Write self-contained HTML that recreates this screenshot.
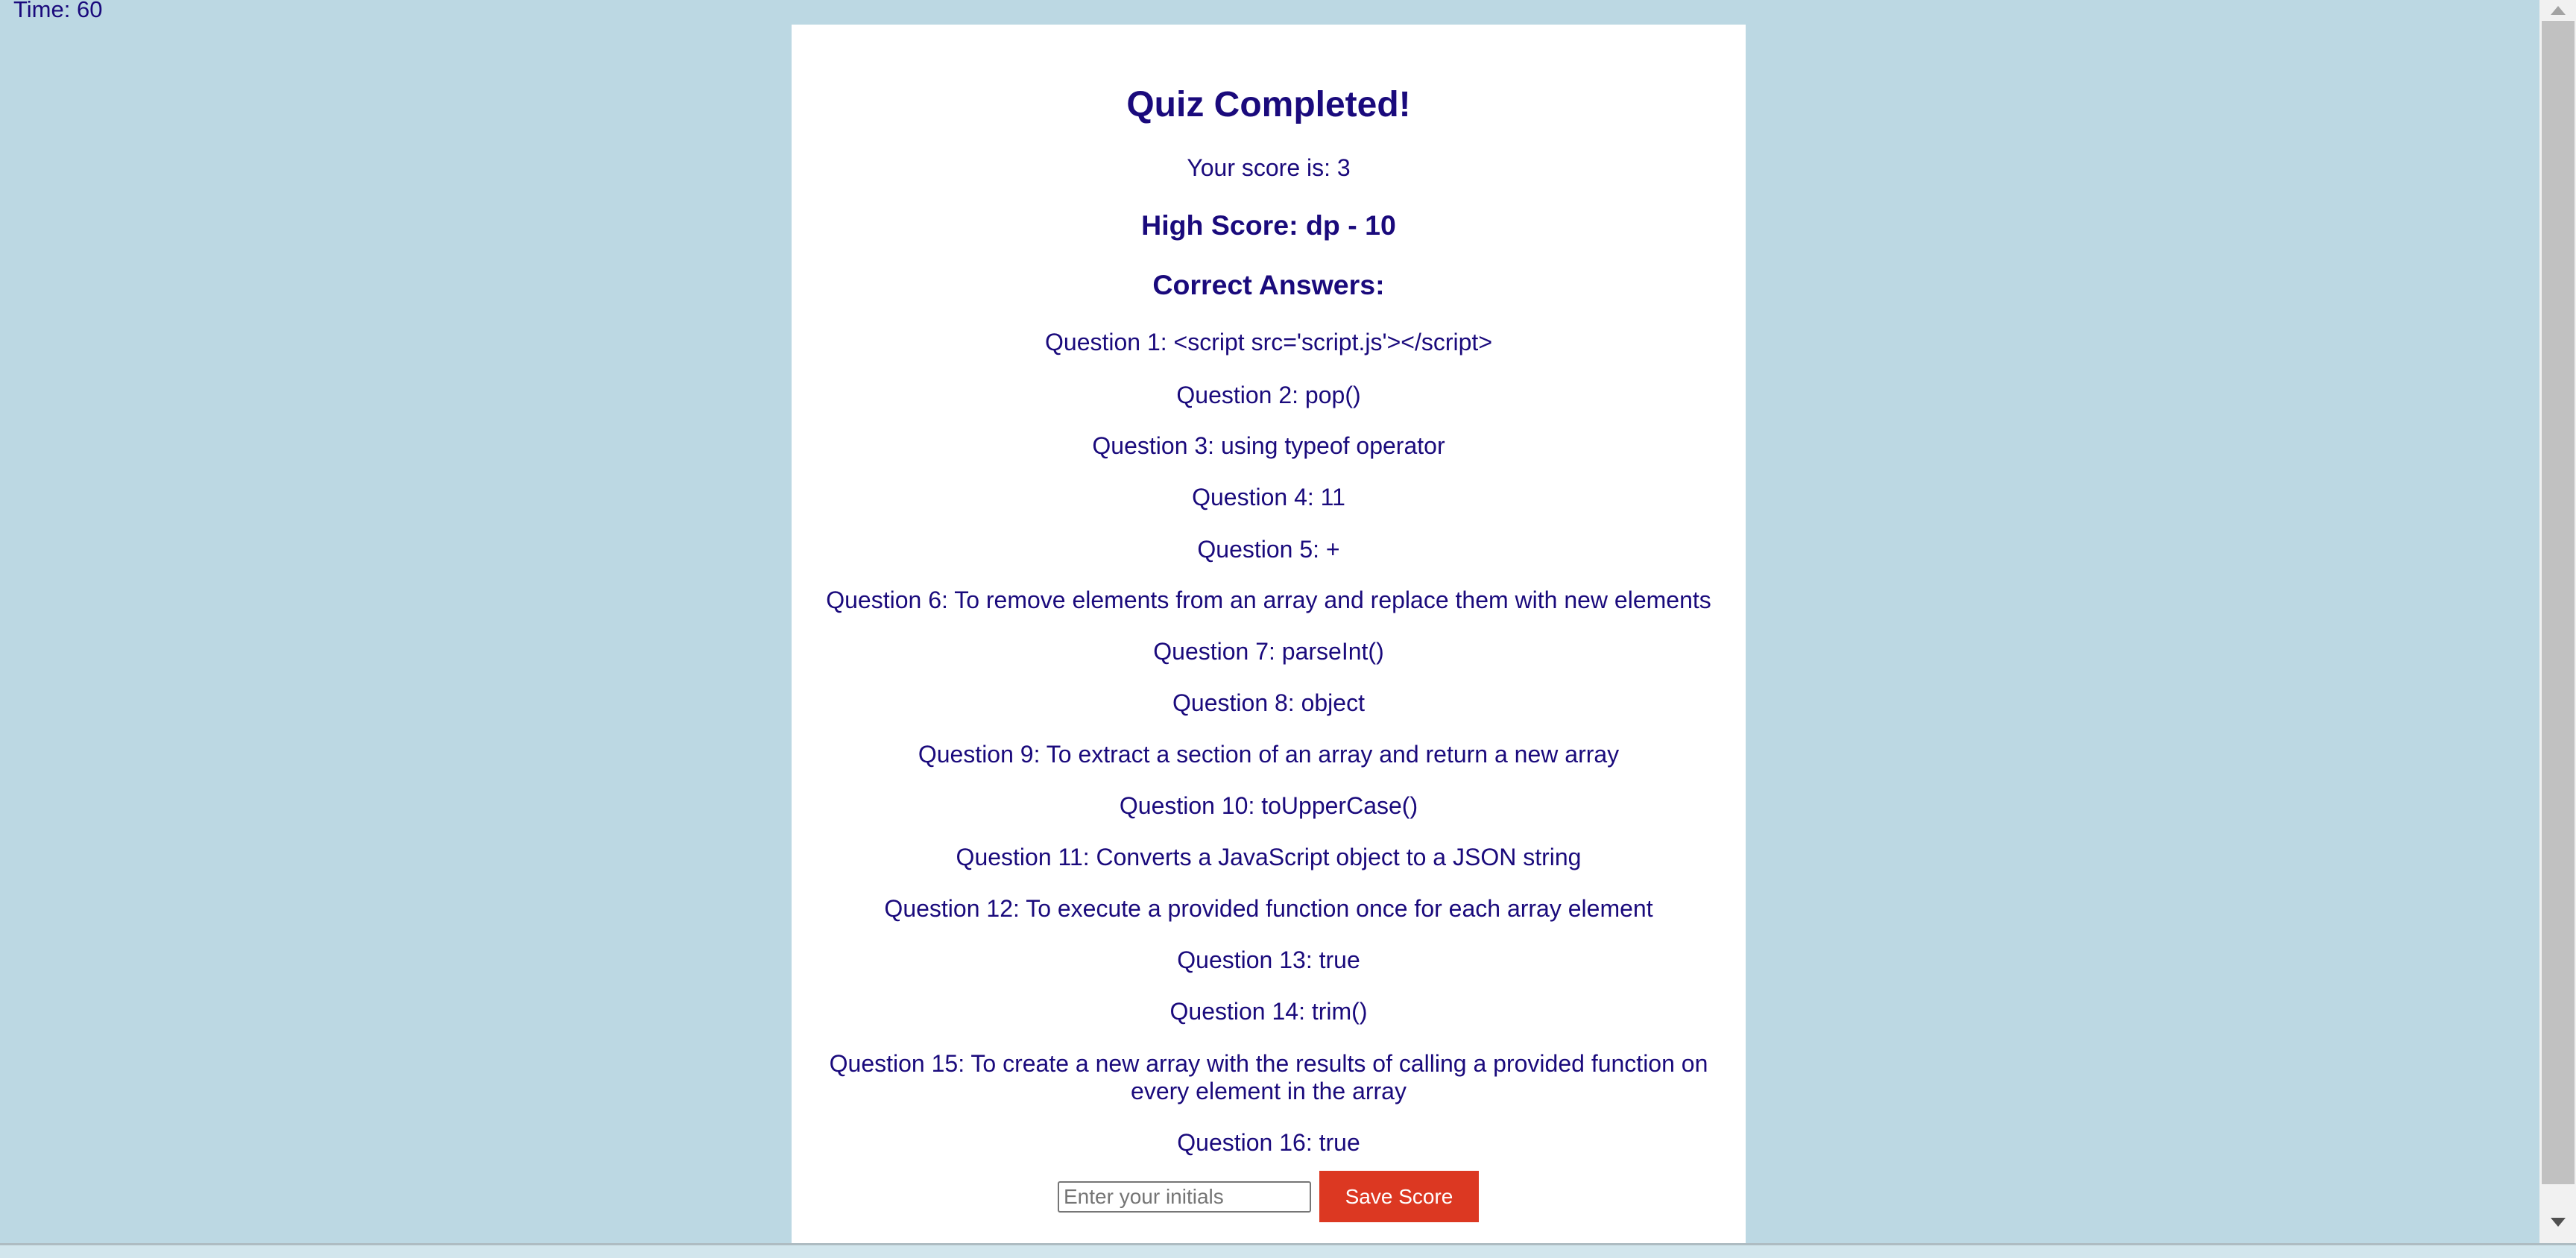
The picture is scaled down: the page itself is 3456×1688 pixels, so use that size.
<!DOCTYPE html>
<html><head><style>
body{margin:0;width:3456px;height:1688px;background:#bcd8e3;font-family:"Liberation Sans",Arial,sans-serif;color:#1a0a7c;overflow:hidden;position:relative}
.t{position:absolute;left:0;width:100%;text-align:center;font-size:32px;line-height:40px;white-space:nowrap}
#card{position:absolute;left:1062px;top:33px;width:1280px;height:1635px;background:#fff}
.b{font-weight:bold}
</style></head><body>
<div style="position:absolute;left:18px;top:-7px;font-size:31px;line-height:40px">Time: 60</div>
<div id="card">
<div class="t b" style="top:78px;font-size:48px;line-height:60px">Quiz Completed!</div>
<div class="t" style="top:172px">Your score is: 3</div>
<div class="t b" style="top:245px;font-size:37.5px;line-height:48px">High Score: dp - 10</div>
<div class="t b" style="top:325px;font-size:37.5px;line-height:48px">Correct Answers:</div>
<div class="t" style="top:406px">Question 1: &lt;script src='script.js'&gt;&lt;/script&gt;</div>
<div class="t" style="top:477px">Question 2: pop()</div>
<div class="t" style="top:545px">Question 3: using typeof operator</div>
<div class="t" style="top:614px">Question 4: 11</div>
<div class="t" style="top:684px">Question 5: +</div>
<div class="t" style="top:752px">Question 6: To remove elements from an array and replace them with new elements</div>
<div class="t" style="top:821px">Question 7: parseInt()</div>
<div class="t" style="top:890px">Question 8: object</div>
<div class="t" style="top:959px">Question 9: To extract a section of an array and return a new array</div>
<div class="t" style="top:1028px">Question 10: toUpperCase()</div>
<div class="t" style="top:1097px">Question 11: Converts a JavaScript object to a JSON string</div>
<div class="t" style="top:1166px">Question 12: To execute a provided function once for each array element</div>
<div class="t" style="top:1235px">Question 13: true</div>
<div class="t" style="top:1304px">Question 14: trim()</div>
<div class="t" style="top:1374px">Question 15: To create a new array with the results of calling a provided function on</div>
<div class="t" style="top:1411px">every element in the array</div>
<div class="t" style="top:1480px">Question 16: true</div>
<div style="position:absolute;left:357px;top:1552px;height:38px;border:2px solid #767676;border-radius:3px;font-size:28px;line-height:38px;color:#757575;padding-left:6px;width:330px">Enter your initials</div>
<div style="position:absolute;left:708px;top:1538px;width:214px;height:69px;background:#dc3822;color:#fff;font-size:28px;line-height:69px;text-align:center">Save Score</div>
</div>
<div style="position:absolute;left:3407px;top:0;width:49px;height:1668px;background:#f1f1f1"></div>
<div style="position:absolute;left:3410px;top:28px;width:44px;height:1561px;background:#c1c1c1"></div>
<div style="position:absolute;left:3422px;top:8px;width:0;height:0;border-left:10px solid transparent;border-right:10px solid transparent;border-bottom:12px solid #a3a3a3"></div>
<div style="position:absolute;left:3422px;top:1634px;width:0;height:0;border-left:10px solid transparent;border-right:10px solid transparent;border-top:12px solid #505050"></div>
<div style="position:absolute;left:0;top:1668px;width:3456px;height:3px;background:#aebcc2"></div>
<div style="position:absolute;left:0;top:1671px;width:3456px;height:17px;background:#d2e6ed"></div>
</body></html>
